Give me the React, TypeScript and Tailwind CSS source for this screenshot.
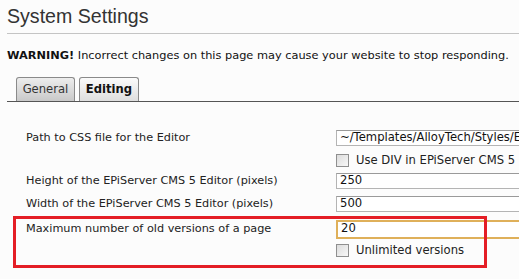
import React from "react";

const verdana = { fontFamily: '"DejaVu Sans", Verdana, sans-serif' };

function Checkbox() {
  return (
    <span className="inline-block w-[13px] h-[13px] border border-[#8f8f8f] bg-gradient-to-br from-[#dcdcdc] to-[#f8f8f8] shrink-0" />
  );
}

function TextInput({ value, focus }: { value: string; focus?: boolean }) {
  return (
    <div
      className={`flex items-center w-[200px] bg-white px-[3px] text-[11.6px] text-[#111] ${
        focus ? "h-[19px] border-2 border-[#dfb05a]" : "h-[16px] border border-[#b4b4b4] border-t-[#9a9a9a]"
      }`}
    >
      <span className="whitespace-nowrap leading-none">{value}</span>
    </div>
  );
}

function Row({ label, children, className = "" }: { label?: string; children: React.ReactNode; className?: string }) {
  return (
    <div className={`flex items-center ${className}`}>
      <div className="w-[310px] shrink-0 text-[11.25px] text-[#222] whitespace-nowrap">{label}</div>
      <div className="flex items-center gap-[7px] whitespace-nowrap">{children}</div>
    </div>
  );
}

export default function App() {
  return (
    <div className="relative w-[519px] h-[279px] overflow-hidden bg-[#fcfcfc]" style={verdana}>
      {/* Heading */}
      <div className="pl-[7px]">
        <h1
          className="pt-[3px] h-[33px] text-[19.6px] text-[#333] leading-[26px]"
          style={{ fontFamily: '"Liberation Sans", Arial, sans-serif' }}
        >
          System Settings
        </h1>
        <div className="h-px bg-[#c4c4c4]" />
        <p className="mt-[14px] text-[11.35px] text-[#111] whitespace-nowrap leading-[14px]">
          <b>WARNING!</b> Incorrect changes on this page may cause your website to stop responding.
        </p>

        {/* Tabs */}
        <div className="mt-[15px] flex items-end gap-[4px] pl-[9px] border-b border-[#555] h-[25px]">
          <div className="h-[24px] w-[59px] flex items-center justify-center rounded-t-[3px] border border-b-0 border-[#8a8a8a] bg-gradient-to-b from-[#ededed] to-[#c9c9c9] text-[11.6px] text-[#333]">
            General
          </div>
          <div className="h-[24px] w-[60px] flex items-center justify-center rounded-t-[3px] border border-b-0 border-[#8a8a8a] bg-gradient-to-b from-[#fbfbfb] to-[#dedede] text-[11.6px] font-bold text-[#111]">
            Editing
          </div>
        </div>
      </div>

      {/* Form */}
      <div className="pl-[26px] pt-[26px] flex flex-col">
        <Row label="Path to CSS file for the Editor" className="h-[20px]">
          <TextInput value="~/Templates/AlloyTech/Styles/Editor.css" />
        </Row>
        <Row className="h-[20px] mt-[3px]">
          <Checkbox />
          <span className="text-[11.6px] text-[#222]">Use DIV in EPiServer CMS 5 Editor</span>
        </Row>
        <Row label="Height of the EPiServer CMS 5 Editor (pixels)" className="h-[20px]">
          <TextInput value="250" />
        </Row>
        <Row label="Width of the EPiServer CMS 5 Editor (pixels)" className="h-[20px] mt-[3px]">
          <TextInput value="500" />
        </Row>
        <Row label="Maximum number of old versions of a page" className="h-[22px] mt-[4px]">
          <TextInput value="20" focus />
        </Row>
        <Row className="h-[20px] mt-px">
          <Checkbox />
          <span className="text-[11.6px] text-[#222]">Unlimited versions</span>
        </Row>
      </div>

      {/* Highlight annotation */}
      <div className="absolute left-[13px] top-[216px] w-[474px] h-[52px] border-[3px] border-[#e41e26]" />
    </div>
  );
}
